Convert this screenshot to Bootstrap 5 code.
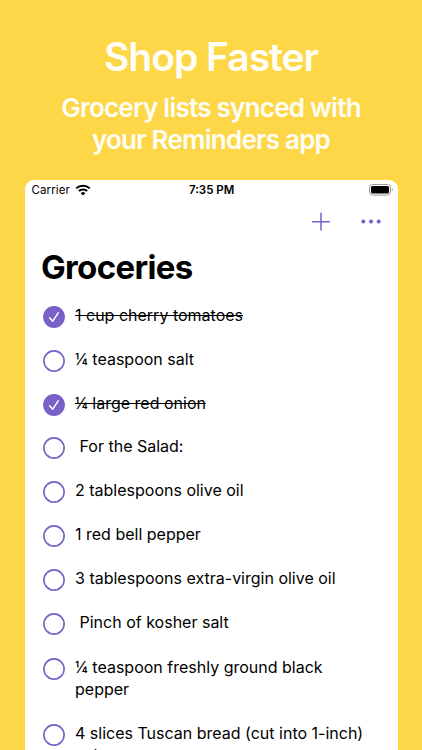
<!DOCTYPE html>
<html lang="en">
<head>
<meta charset="utf-8">
<meta name="viewport" content="width=device-width, initial-scale=1">
<title>Shop Faster</title>
<link href="https://cdn.jsdelivr.net/npm/bootstrap@5.3.0/dist/css/bootstrap.min.css" rel="stylesheet">
<style>
  body { background: #fdd748; font-family: Inter, "Liberation Sans", sans-serif; color: #000; height: 750px; }
  .promo { height: 180px; padding-top: 33px; color: #fffef6; }
  .promo-title { font-size: 39px; font-weight: 600; line-height: 48px; letter-spacing: -1px; }
  .promo-sub { font-size: 26px; font-weight: 600; line-height: 32px; letter-spacing: -.75px; padding-top: 11px; }
  .phone { margin: 0 24px 0 25px; height: 570px; border-radius: 9px 9px 0 0; }
  .status { height: 20px; padding: 0 5px 0 6.5px; font-size: 11.5px; line-height: 20px; }
  .carrier { letter-spacing: .1px; margin-right: 1px; }
  .clock { font-weight: 600; position: relative; left: -.6px; }
  .tools { height: 44px; padding-right: 16.5px; gap: 29px; }
  .list-title { font-size: 33px; font-weight: 700; line-height: 40px; letter-spacing: -.65px; margin: 3px 0 0 16px; }
  .items { padding: 6px 16px 0 18px; }
  .item { padding: 11px 0 10.8px; gap: 10px; font-size: 16px; line-height: 22px; }
  .item svg { margin: 2px 0 -2px; }
  .item span { white-space: pre; }
  .item.two { padding-top: 12.7px; }
  .done { text-decoration: line-through; text-decoration-thickness: 1px; }
</style>
</head>
<body class="overflow-hidden">
<svg class="d-none">
  <symbol id="open" viewBox="0 0 22 22"><circle cx="11" cy="11" r="10.1" fill="#fff" stroke="#795fc8" stroke-width="1.6"/></symbol>
  <symbol id="checked" viewBox="0 0 22 22"><circle cx="11" cy="11" r="10.9" fill="#795fc8"/><path d="M6.6 11.7 9.8 15.2 15.2 6.8" fill="none" stroke="#fff" stroke-width="1.5" stroke-linecap="round" stroke-linejoin="round"/></symbol>
</svg>
<header class="promo text-center">
  <h1 class="promo-title m-0"><span>Shop Faster</span></h1>
  <p class="promo-sub m-0"><span>Grocery lists synced with</span><br><span>your Reminders app</span></p>
</header>
<main class="phone bg-white overflow-hidden">
  <div class="status row g-0 align-items-center">
    <div class="col d-flex align-items-center gap-1">
      <span class="carrier">Carrier</span>
      <svg width="16" height="12" viewBox="0 0 16 12"><g fill="none" stroke="#000" stroke-width="2"><path d="M1.2 4.4a9.8 9.8 0 0 1 13.6 0"/><path d="M3.8 7.1a6.1 6.1 0 0 1 8.4 0"/></g><path d="M8 11.6 5.7 9.2a3.3 3.3 0 0 1 4.6 0z"/></svg>
    </div>
    <div class="col-auto clock">7:35 PM</div>
    <div class="col d-flex justify-content-end">
      <svg width="24" height="12" viewBox="0 0 24 12"><rect x=".5" y=".5" width="21" height="10.6" rx="3" fill="#fff" stroke="#999"/><rect x="2" y="2" width="18" height="7.6" rx="1.6"/><path d="M22.8 4v3.6q1-.6 1-1.8t-1-1.8" fill="#999"/></svg>
    </div>
  </div>
  <nav class="tools d-flex justify-content-end align-items-center">
    <svg width="20" height="20" viewBox="0 0 20 20"><path d="M10 1.3v16.8M1.6 9.7h16.8" stroke="#795fc8" stroke-width="1.5" stroke-linecap="round"/></svg>
    <svg width="22" height="6" viewBox="0 0 22 6" fill="#795fc8"><circle cx="3.3" cy="2.4" r="2"/><circle cx="11" cy="2.4" r="2"/><circle cx="18.7" cy="2.4" r="2"/></svg>
  </nav>
  <h2 class="list-title"><span>Groceries</span></h2>
  <div class="items">
    <div class="item d-flex align-items-start"><svg class="flex-shrink-0" width="22" height="22"><use href="#checked"/></svg><span class="done">1 cup cherry tomatoes</span></div>
    <div class="item d-flex align-items-start"><svg class="flex-shrink-0" width="22" height="22"><use href="#open"/></svg><span>¼ teaspoon salt</span></div>
    <div class="item d-flex align-items-start"><svg class="flex-shrink-0" width="22" height="22"><use href="#checked"/></svg><span class="done">¼ large red onion</span></div>
    <div class="item d-flex align-items-start"><svg class="flex-shrink-0" width="22" height="22"><use href="#open"/></svg><span> For the Salad:</span></div>
    <div class="item d-flex align-items-start"><svg class="flex-shrink-0" width="22" height="22"><use href="#open"/></svg><span>2 tablespoons olive oil</span></div>
    <div class="item d-flex align-items-start"><svg class="flex-shrink-0" width="22" height="22"><use href="#open"/></svg><span>1 red bell pepper</span></div>
    <div class="item d-flex align-items-start"><svg class="flex-shrink-0" width="22" height="22"><use href="#open"/></svg><span>3 tablespoons extra-virgin olive oil</span></div>
    <div class="item d-flex align-items-start"><svg class="flex-shrink-0" width="22" height="22"><use href="#open"/></svg><span> Pinch of kosher salt</span></div>
    <div class="item two d-flex align-items-start"><svg class="flex-shrink-0" width="22" height="22"><use href="#open"/></svg><span>¼ teaspoon freshly ground black
pepper</span></div>
    <div class="item d-flex align-items-start"><svg class="flex-shrink-0" width="22" height="22"><use href="#open"/></svg><span>4 slices Tuscan bread (cut into 1-inch)
cubes</span></div>
  </div>
</main>
<script src="https://cdn.jsdelivr.net/npm/bootstrap@5.3.0/dist/js/bootstrap.bundle.min.js"></script>
</body>
</html>
